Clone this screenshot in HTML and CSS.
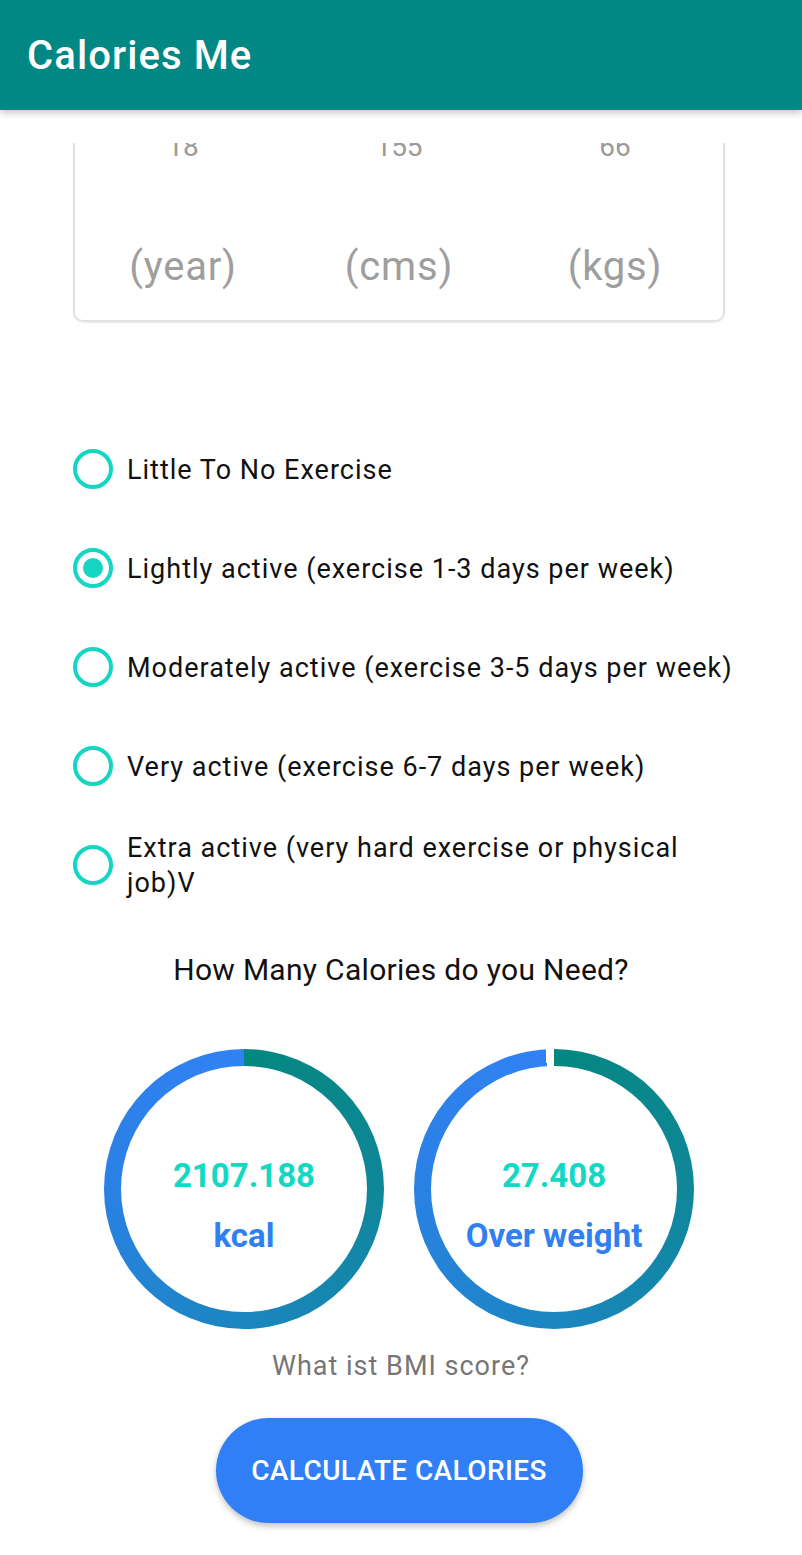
FILE: index.html
```html
<!DOCTYPE html>
<html>
<head>
<meta charset="utf-8">
<link rel="stylesheet" href="styles.css">
</head>
<body>
<div class="app">
  <header class="toolbar"><h1 class="title">Calories Me</h1></header>
  <main class="scroller">
    <section class="card">
      <div class="col"><div class="num">18</div><div class="unit">(year)</div></div>
      <div class="col"><div class="num">155</div><div class="unit">(cms)</div></div>
      <div class="col"><div class="num">66</div><div class="unit">(kgs)</div></div>
    </section>

    <div class="radios">
      <div class="radio-row"><span class="radio"></span><span class="label">Little To No Exercise</span></div>
      <div class="radio-row"><span class="radio checked"></span><span class="label">Lightly active (exercise 1-3 days per week)</span></div>
      <div class="radio-row"><span class="radio"></span><span class="label">Moderately active (exercise 3-5 days per week)</span></div>
      <div class="radio-row"><span class="radio"></span><span class="label">Very active (exercise 6-7 days per week)</span></div>
      <div class="radio-row"><span class="radio"></span><span class="label">Extra active (very hard exercise or physical job)V</span></div>
    </div>

    <p class="question">How Many Calories do you Need?</p>

    <div class="rings">
      <div class="ring ring-full">
        <div class="ring-inner">
          <div class="ring-value">2107.188</div>
          <div class="ring-label">kcal</div>
        </div>
      </div>
      <div class="ring ring-gap">
        <div class="ring-inner">
          <div class="ring-value">27.408</div>
          <div class="ring-label">Over weight</div>
        </div>
      </div>
    </div>

    <p class="bmi">What ist BMI score?</p>

    <div class="btn-wrap"><button class="btn">CALCULATE CALORIES</button></div>
  </main>
</div>
</body>
</html>
```

FILE: styles.css
```css
* { box-sizing: border-box; }
html, body { margin: 0; padding: 0; background: #fff; }
body { font-family: Roboto, "Liberation Sans", sans-serif; color: #000; }

.app { width: 802px; height: 1555px; overflow: hidden; position: relative; }

.toolbar {
  height: 110px;
  background: #028884;
  display: flex;
  align-items: center;
  padding-left: 27px;
  box-shadow: 0 3px 7px rgba(0,0,0,0.22);
  position: relative;
  z-index: 2;
}
.title { margin: 0; color: #fff; font-size: 40px; font-weight: 500; letter-spacing: 1.1px; }

.scroller { margin-top: 33px; height: 1412px; overflow: hidden; }

.card {
  margin: -18px 0 0 73px;
  width: 652px;
  border: 2px solid #e2e2e2;
  border-radius: 10px;
  box-shadow: 0 1px 2px rgba(0,0,0,0.08);
  display: grid;
  grid-template-columns: 1fr 1fr 1fr;
  padding-bottom: 29px;
}
.col { text-align: center; }
.num { font-size: 28px; line-height: 40px; color: #9a9a9a; }
.unit { font-size: 40px; line-height: 48px; color: #9e9e9e; margin-top: 76px; letter-spacing: 0.8px; }

.radios { margin-top: 97px; padding-left: 73px; padding-right: 62px; }
.radio-row { height: 99px; display: flex; align-items: center; }
.radio {
  flex: 0 0 40px;
  width: 40px; height: 40px;
  border: 4px solid #15d6c3;
  border-radius: 50%;
  display: flex; align-items: center; justify-content: center;
}
.radio.checked::after {
  content: "";
  width: 20px; height: 20px; border-radius: 50%;
  background: #15d6c3;
}
.label { margin-left: 14px; font-size: 27px; line-height: 35px; color: #111; padding-top: 3px; letter-spacing: 1px; }

.question { margin: 38px 0 0; text-align: center; font-size: 30px; line-height: 35px; color: #111; letter-spacing: 0.3px; }

.rings { margin-top: 62px; display: flex; justify-content: center; gap: 30px; padding-right: 4px; }
.ring {
  width: 280px; height: 280px; border-radius: 50%; padding: 17px;
  background: conic-gradient(from 0deg, #04877f 0deg, #0f8799 90deg, #1a86c0 180deg, #2a81e4 270deg, #3181f4 360deg);
}
.ring-gap {
  background: conic-gradient(from 0deg, #04877f 0deg, #0f8799 90deg, #1a86c0 180deg, #2a81e4 270deg, #3181f4 356.6deg, #fff 356.6deg, #fff 360deg);
}
.ring-inner {
  width: 100%; height: 100%; border-radius: 50%; background: #fff;
  display: flex; flex-direction: column; align-items: center;
  padding-top: 90px;
}
.ring-value { font-size: 33px; line-height: 40px; font-weight: 700; color: #13d8c3; }
.ring-label { font-size: 33px; line-height: 40px; font-weight: 700; color: #3080f2; margin-top: 20px; }

.bmi { margin: 20px 0 0; text-align: center; font-size: 27px; line-height: 35px; color: #767676; letter-spacing: 1px; }

.btn-wrap { margin-top: 34px; display: flex; justify-content: center; padding-right: 4px; }
.btn {
  width: 367px; height: 105px; border: none; border-radius: 53px;
  background: #307ff6; color: #fff;
  font-family: Roboto, "Liberation Sans", sans-serif;
  font-size: 28px; font-weight: 500; letter-spacing: 0.4px;
  box-shadow: 0 3px 6px rgba(0,0,0,0.25);
}
```
